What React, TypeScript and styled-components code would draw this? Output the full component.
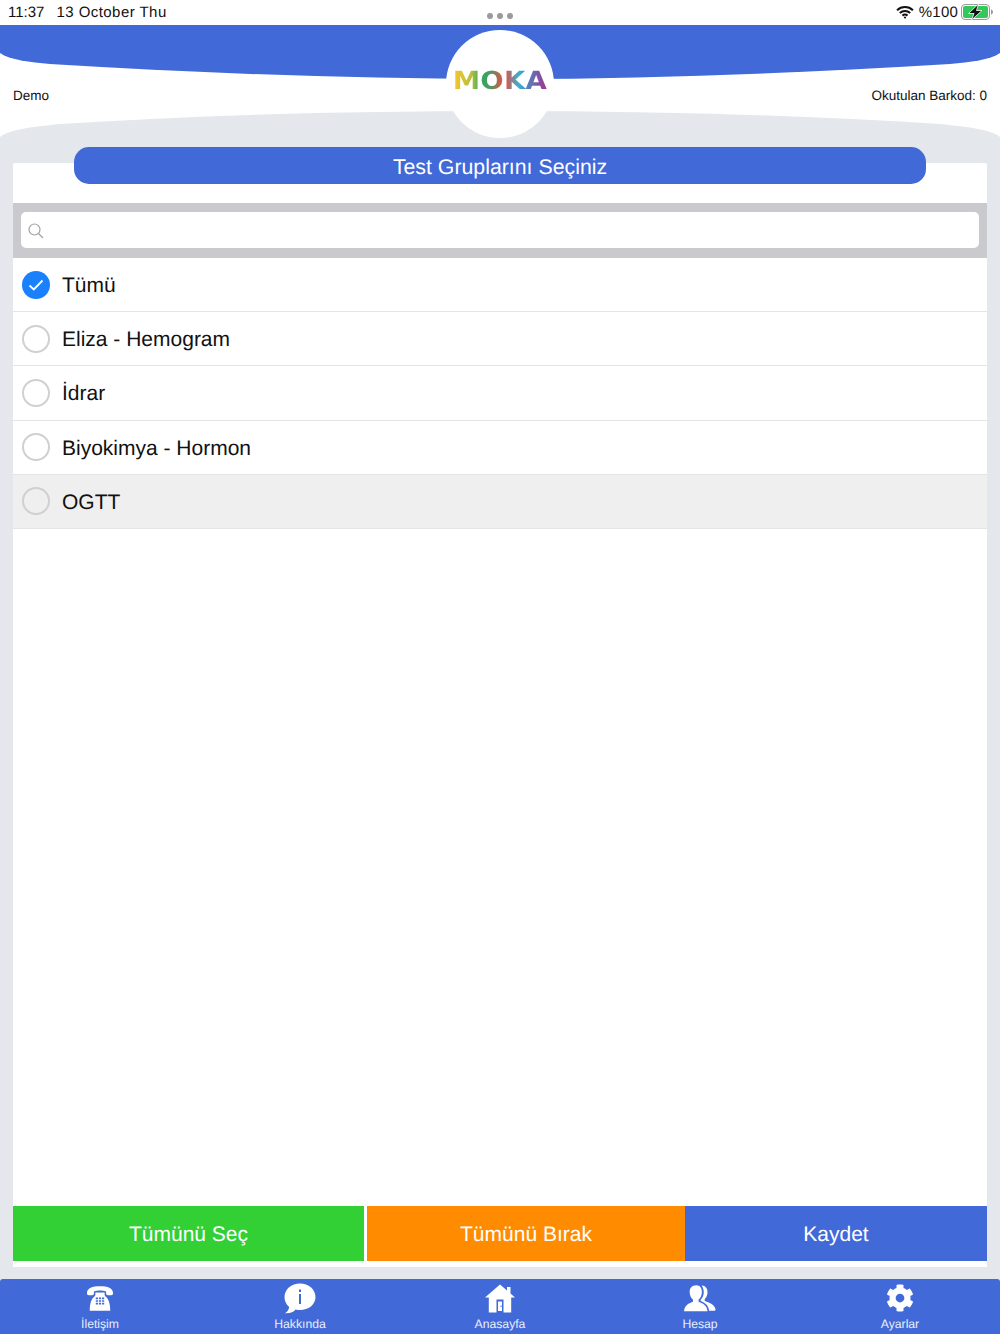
import React from "react";
import styled, { createGlobalStyle } from "styled-components";
import { FaCog } from "react-icons/fa";

const Global = createGlobalStyle`
  html, body { margin: 0; padding: 0; background: #e4e8ec; }
  body { font-family: "Liberation Sans", Arial, sans-serif; text-rendering: geometricPrecision; }
  * { box-sizing: border-box; }
`;

const Page = styled.div`
  width: 1000px; height: 1334px; display: flex; flex-direction: column;
  background: #e4e8ec; overflow: hidden;
`;
const StatusBar = styled.div`
  height: 25px; flex: none; background: #fff; display: flex; align-items: center;
  justify-content: space-between; padding: 0 6px 0 8px; position: relative;
  font-size: 15px; line-height: 17px; color: #111;
`;
const StatusLeft = styled.div`display: flex; gap: 12px; margin-top: -1px;`;
const DateText = styled.span`letter-spacing: 0.45px;`;
const StatusRight = styled.div`display: flex; align-items: center; gap: 5px; letter-spacing: 0.2px; margin-top: -1px;`;
const Dots = styled.div`
  position: absolute; left: 487px; top: 13px; display: flex; gap: 4px;
`;
const Dot = styled.span`width: 6px; height: 6px; border-radius: 50%; background: #9a9a9a;`;
const Header = styled.header`
  height: 138px; flex: none; position: relative; background: #fff;
  display: flex; justify-content: space-between; padding: 63px 13px 0;
  font-size: 13.5px; color: #111;
`;
const Wave = styled.svg`position: absolute; left: 0; top: 0; width: 1000px; height: 138px;`;
const HeaderText = styled.span`position: relative; line-height: 15px;`;
const LogoCircle = styled.div`
  position: absolute; left: 446px; top: 5px; width: 108px; height: 108px; border-radius: 50%;
  background: #fff; display: flex; align-items: center; justify-content: center;
`;
const LogoText = styled.span`
  font-family: "DejaVu Sans", sans-serif; font-weight: 700; font-size: 25px; line-height: 25px;
  letter-spacing: 0.2px; margin: -8px 0 0 0; transform: scaleX(1.1);
  background: linear-gradient(90deg, #fdc52f 0%, #b4c03a 20%, #2fa765 30%, #4f9a5e 40%, #d9544e 52%, #d9544e 56%, #35b2cf 70%, #4f86c0 78%, #a5308c 100%);
  -webkit-background-clip: text; background-clip: text; color: transparent;
`;
const Card = styled.main`
  flex: 1; margin: 0 13px; background: #fff; border-radius: 2px 2px 0 0;
  display: flex; flex-direction: column; padding-bottom: 6px;
`;
const TitlePill = styled.h1`
  height: 37px; margin: -16px 61px 0; position: relative; background: #4169d8; color: #fff;
  border-radius: 15px; font-size: 21.3px; font-weight: 400; display: flex;
  align-items: center; justify-content: center; padding-top: 3px;
`;
const SearchBar = styled.div`
  height: 55px; flex: none; margin-top: 19px; background: #c9c9ce; padding: 9px 8px 10px;
`;
const SearchInput = styled.div`
  height: 36px; background: #fff; border-radius: 5px; display: flex; align-items: center; padding: 1px 0 0 7px;
`;
const List = styled.div`flex: 1;`;
const Row = styled.div<{ $shaded?: boolean }>`
  height: 54.2px; display: flex; align-items: center; gap: 12px; padding-left: 9px;
  border-bottom: 1.5px solid #e4e4e6; font-size: 21px; color: #111;
  background: ${(p) => (p.$shaded ? "#efefef" : "#fff")};
`;
const RowLabel = styled.span`padding-top: 3px;`;
const Radio = styled.span<{ $on?: boolean }>`
  width: 28px; height: 28px; border-radius: 50%; flex: none; display: flex;
  align-items: center; justify-content: center;
  border: ${(p) => (p.$on ? "none" : "2px solid #d0d0d2")};
  background: ${(p) => (p.$on ? "#1a80fb" : "transparent")};
`;
const Actions = styled.div`display: flex; height: 55px; flex: none;`;
const ActionButton = styled.div<{ $bg: string; $w: number; $gap?: number }>`
  width: ${(p) => p.$w}px; margin-left: ${(p) => p.$gap ?? 0}px; background: ${(p) => p.$bg};
  color: #fff; font-size: 21px; display: flex; align-items: center; justify-content: center;
  padding-top: 3px;
`;
const TabBar = styled.nav`
  height: 55px; flex: none; margin-top: 12px; background: #4169d8; border-radius: 3px 3px 0 0;
  display: grid; grid-template-columns: repeat(5, 200px);
`;
const Tab = styled.div`
  display: flex; flex-direction: column; align-items: center; color: #e9eefa; font-size: 12.2px;
  position: relative; padding-top: 2px;
`;
const TabIcon = styled.div`height: 34px; width: 36px; display: flex; align-items: center; justify-content: center; color: #fff;`;
const TabLabel = styled.span`line-height: 14px; margin-top: 2px;`;

const PhoneIcon = () => (
  <svg width="28" height="27" viewBox="0 0 30 28" fill="#fff">
    <path d="M1 8.500C1 3 7 1 15 1s14 2 14 7.500c0 1.400-.8 2-2 2h-3.500c-1.300 0-2-.7-2-2V6.500c-2-.9-4.500-1.200-6.500-1.200s-4.500.3-6.500 1.200v2c0 1.300-.7 2-2 2H3c-1.200 0-2-.6-2-2z" />
    <path fillRule="evenodd" d="M10 7.500h10v2.500c0 .7.400 1.300 1 1.800 3 2.500 5 7 5 15.200H4c0-8.200 2-12.700 5-15.200.6-.5 1-1.100 1-1.800zM10.500 13v1.700h2.300V13zm3.300 0v1.700h2.400V13zm3.400 0v1.700h2.300V13zm-6.700 2.800v1.700h2.300v-1.700zm3.300 0v1.700h2.400v-1.700zm3.400 0v1.700h2.300v-1.700zm-6.700 2.800v1.700h2.300v-1.700zm3.300 0v1.700h2.400v-1.700zm3.400 0v1.700h2.300v-1.700z" />
  </svg>
);
const InfoIcon = () => (
  <svg width="32" height="31" viewBox="0 0 32 31" fill="#fff">
    <path fillRule="evenodd" d="M16 .5c8.500 0 15.500 5.800 15.500 13.500S24.500 27 16 27c-1.600 0-3-.2-4.400-.6C10 28.700 6.500 30.500.8 30.300c2.400-1.400 4-3.600 4.400-6.400C2.200 21.500.5 18 .5 14 .5 6.300 7.500.5 16 .5zM15 6.500v2.600h2V6.500zm0 4.500v10h2V11z" />
  </svg>
);
const HomeIcon = () => (
  <svg width="30" height="29" viewBox="0 0 30 29" fill="#fff">
    <path fillRule="evenodd" d="M15 .5l7 6V3h3.500v6.500L30 13.500h-3.800V28.500H3.800V13.500H0zM11.500 15.500V28.500h7V15.500zM13 17.500h4v9.500h-4zM15.600 21.500v1.600h1v-1.600z" />
  </svg>
);
const UsersIcon = () => (
  <svg width="32" height="28" viewBox="0 0 34 29" fill="#fff">
    <path d="M13 1c-4.500 0-7 3-7 7 0 3.500 1.500 6.500 3.500 8v2.500C6 20 .8 21.500 0 28.500h25c-.7-7-6-8.500-9.500-10V16c2-1.500 3.500-4.500 3.500-8 0-4-2-7-6-7z" />
    <path d="M19 1.200c3.800.3 6 3 6 6.800 0 3.200-1.300 6-3 7.500v2.300c3.500 1.300 10 3 11.500 8.700.2.800-.4 1.500-1 1.500H26.700c-.6-5-3.500-8-9-10.200v-1.500c2-1.800 3.300-4.600 3.300-7.800 0-2.600-.7-5-2-6.800z" />
  </svg>
);

const tabs = [
  { label: "İletişim", icon: <PhoneIcon /> },
  { label: "Hakkında", icon: <InfoIcon /> },
  { label: "Anasayfa", icon: <HomeIcon /> },
  { label: "Hesap", icon: <UsersIcon /> },
  { label: "Ayarlar", icon: <FaCog size={28} /> },
];
const rows = ["Tümü", "Eliza - Hemogram", "İdrar", "Biyokimya - Hormon", "OGTT"];

export default function App() {
  return (
    <Page>
      <Global />
      <StatusBar>
        <StatusLeft><span>11:37</span><DateText>13 October Thu</DateText></StatusLeft>
        <Dots><Dot /><Dot /><Dot /></Dots>
        <StatusRight>
          <svg width="18" height="14" viewBox="0 0 17 13" fill="none" stroke="#111" strokeWidth="2">
            <path d="M1 4.800c4.200-4 10.800-4 15 0" />
            <path d="M3.600 7.400c2.700-2.500 7.100-2.500 9.800 0" />
            <path d="M6.100 9.900c1.300-1.100 3.500-1.100 4.800 0" />
            <circle cx="8.500" cy="11.700" r="1" fill="#111" stroke="none" />
          </svg>
          <span>%100</span>
          <svg width="33" height="16" viewBox="0 0 33 16" style={{ marginLeft: -2 }}>
            <rect x="0.500" y="0.500" width="28" height="15" rx="3.500" fill="#fff" stroke="#9a9a9a" />
            <rect x="2" y="2" width="25" height="12" rx="2" fill="#34c759" />
            <path d="M30 5.500c1.300.3 2 1.300 2 2.500s-.7 2.200-2 2.500z" fill="#9a9a9a" />
            <path d="M17.500 0L7.500 9.500h5.500L10.500 16 21 6.500h-5.500z" fill="#111" stroke="#fff" strokeWidth="0.800" />
          </svg>
        </StatusRight>
      </StatusBar>
      <Header>
        <Wave viewBox="0 0 1000 138">
          <path fill="#4169d8" d="M0 0H1000V28C990 35 970 37 950 39 800 48 650 54 500 54 350 54 200 48 50 39 30 37 10 35 0 28Z" />
          <path fill="#e4e8ec" d="M0 112C8 105 30 102 60 99 200 90 350 86 500 86 650 86 800 90 940 99 970 102 992 105 1000 112V138H0Z" />
        </Wave>
        <HeaderText>Demo</HeaderText>
        <LogoCircle><LogoText>MOKA</LogoText></LogoCircle>
        <HeaderText>Okutulan Barkod: 0</HeaderText>
      </Header>
      <Card>
        <TitlePill>Test Gruplarını Seçiniz</TitlePill>
        <SearchBar>
          <SearchInput>
            <svg width="16" height="16" viewBox="0 0 16 16" fill="none" stroke="#a2a2a6" strokeWidth="1.200">
              <circle cx="6.500" cy="6.500" r="5.500" />
              <path d="M10.500 10.500L15 15" />
            </svg>
          </SearchInput>
        </SearchBar>
        <List>
          {rows.map((r, i) => (
            <Row key={r} $shaded={i === 4}>
              <Radio $on={i === 0}>
                {i === 0 && (
                  <svg width="16" height="12" viewBox="0 0 16 12" fill="none" stroke="#fff" strokeWidth="1.800">
                    <path d="M1.500 6.500L5.800 10.500 14.500 1.500" />
                  </svg>
                )}
              </Radio>
              <RowLabel>{r}</RowLabel>
            </Row>
          ))}
        </List>
        <Actions>
          <ActionButton $bg="#32d035" $w={351}>Tümünü Seç</ActionButton>
          <ActionButton $bg="#ff8c00" $w={318} $gap={3}>Tümünü Bırak</ActionButton>
          <ActionButton $bg="#4169d8" $w={302}>Kaydet</ActionButton>
        </Actions>
      </Card>
      <TabBar>
        {tabs.map((t) => (
          <Tab key={t.label}>
            <TabIcon>{t.icon}</TabIcon>
            <TabLabel>{t.label}</TabLabel>
          </Tab>
        ))}
      </TabBar>
    </Page>
  );
}
